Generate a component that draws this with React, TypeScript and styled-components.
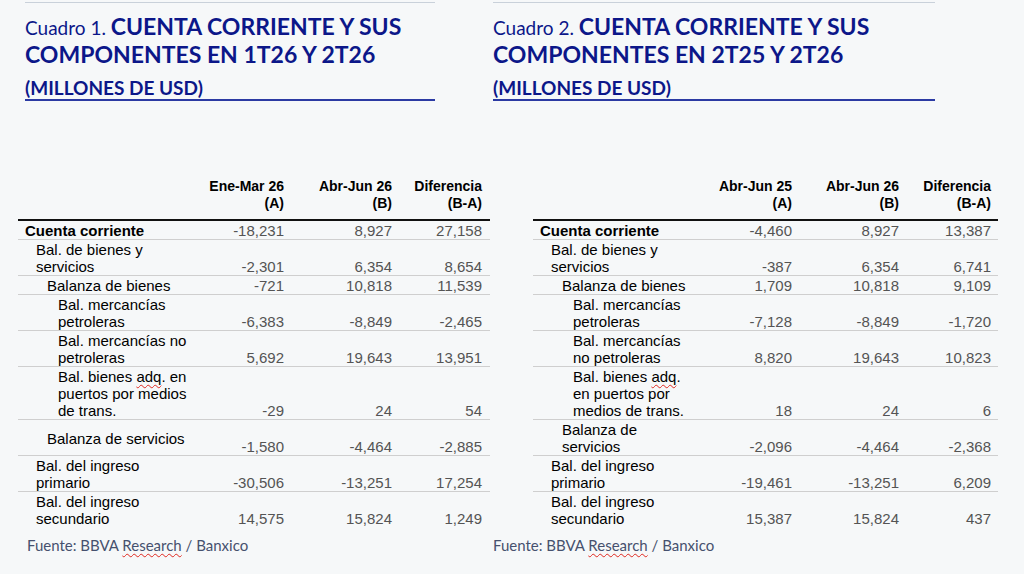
import React from 'react';
import styled, { createGlobalStyle } from 'styled-components';

const GlobalStyle = createGlobalStyle`
  html, body {
    margin: 0;
    padding: 0;
    background: #f6f8f9;
  }
  body {
    width: 1024px;
    height: 574px;
    overflow: hidden;
  }
`;

const Page = styled.main`
  display: flex;
  flex-direction: row;
  align-items: flex-start;
`;

const Panel = styled.section<{ $width: number }>`
  width: ${(p) => p.$width}px;
  flex: none;
  display: flex;
  flex-direction: column;
`;

const Heading = styled.header<{ $inset: number; $width: number }>`
  margin: 2px 0 0 ${(p) => p.$inset}px;
  width: ${(p) => p.$width}px;
  border-top: 1px solid #c9d1da;
  padding-top: 10px;
  color: #0c1789;
  font-family: Lato, 'Open Sans', sans-serif;
`;

const Title = styled.h2`
  margin: 0;
  font-size: 23px;
  font-weight: 700;
  line-height: 27px;
  letter-spacing: 0;
`;

const Kicker = styled.span`
  font-size: 19px;
  font-weight: 400;
`;

const Subtitle = styled.h3`
  margin: 9px 0 0;
  font-size: 19px;
  font-weight: 700;
  line-height: 22px;
  border-bottom: 2px solid #2b3aa3;
`;

const Table = styled.div<{ $inset: number; $width: number }>`
  margin: 77px 0 0 ${(p) => p.$inset}px;
  width: ${(p) => p.$width}px;
  font-family: 'Liberation Sans', Arial, sans-serif;
  font-size: 15px;
  line-height: 17px;
`;

const HeadRow = styled.div<{ $cols: string; $pad: number }>`
  display: grid;
  grid-template-columns: ${(p) => p.$cols};
  padding: 0 ${(p) => p.$pad}px 7px 0;
  border-bottom: 2px solid #111;
  font-size: 14px;
  font-weight: 700;
  color: #000;
`;

const HeadCell = styled.div`
  text-align: right;
  white-space: nowrap;
`;

const BodyRow = styled.div<{ $cols: string; $pad: number; $lines: number; $last?: boolean }>`
  display: grid;
  grid-template-columns: ${(p) => p.$cols};
  min-height: ${(p) => p.$lines * 17}px;
  padding: 1px ${(p) => p.$pad}px 0 0;
  border-bottom: ${(p) => (p.$last ? '1px solid transparent' : '1px solid #cfcfcf')};
`;

const Label = styled.div<{ $level: number; $bold?: boolean }>`
  align-self: center;
  padding-left: ${(p) => 7 + p.$level * 11}px;
  color: #000;
  font-weight: ${(p) => (p.$bold ? 700 : 400)};
  white-space: nowrap;
`;

const Value = styled.div`
  align-self: end;
  text-align: right;
  color: #545454;
  white-space: nowrap;
`;

const Spell = styled.span`
  text-decoration: underline wavy #e0281f;
  text-decoration-thickness: 1px;
  text-underline-offset: 2px;
  text-decoration-skip-ink: none;
`;

const Source = styled.p<{ $inset: number }>`
  margin: 8px 0 0 ${(p) => p.$inset}px;
  font-family: Lato, 'Open Sans', sans-serif;
  font-size: 15px;
  line-height: 18px;
  color: #46516e;
`;

interface RowData {
  level: number;
  bold?: boolean;
  label: React.ReactNode[];
  lines?: number;
  values: string[];
}

interface TableData {
  number: number;
  title: [string, string];
  heads: string[][];
  rows: RowData[];
}

interface Geometry {
  width: number;
  headInset: number;
  headWidth: number;
  tableInset: number;
  tableWidth: number;
  cols: string;
  pad: number;
  sourceInset: number;
}

const left: TableData = {
  number: 1,
  title: ['CUENTA CORRIENTE Y SUS', 'COMPONENTES EN 1T26 Y 2T26'],
  heads: [
    ['Ene-Mar 26', '(A)'],
    ['Abr-Jun 26', '(B)'],
    ['Diferencia', '(B-A)'],
  ],
  rows: [
    { level: 0, bold: true, label: ['Cuenta corriente'], values: ['-18,231', '8,927', '27,158'] },
    { level: 1, label: ['Bal. de bienes y', 'servicios'], values: ['-2,301', '6,354', '8,654'] },
    { level: 2, label: ['Balanza de bienes'], values: ['-721', '10,818', '11,539'] },
    { level: 3, label: ['Bal. mercancías', 'petroleras'], values: ['-6,383', '-8,849', '-2,465'] },
    { level: 3, label: ['Bal. mercancías no', 'petroleras'], values: ['5,692', '19,643', '13,951'] },
    {
      level: 3,
      label: [
        <>
          Bal. bienes <Spell>adq</Spell>. en
        </>,
        'puertos por medios',
        'de trans.',
      ],
      values: ['-29', '24', '54'],
    },
    { level: 2, label: ['Balanza de servicios'], lines: 2, values: ['-1,580', '-4,464', '-2,885'] },
    { level: 1, label: ['Bal. del ingreso', 'primario'], values: ['-30,506', '-13,251', '17,254'] },
    { level: 1, label: ['Bal. del ingreso', 'secundario'], values: ['14,575', '15,824', '1,249'] },
  ],
};

const right: TableData = {
  number: 2,
  title: ['CUENTA CORRIENTE Y SUS', 'COMPONENTES EN 2T25 Y 2T26'],
  heads: [
    ['Abr-Jun 25', '(A)'],
    ['Abr-Jun 26', '(B)'],
    ['Diferencia', '(B-A)'],
  ],
  rows: [
    { level: 0, bold: true, label: ['Cuenta corriente'], values: ['-4,460', '8,927', '13,387'] },
    { level: 1, label: ['Bal. de bienes y', 'servicios'], values: ['-387', '6,354', '6,741'] },
    { level: 2, label: ['Balanza de bienes'], values: ['1,709', '10,818', '9,109'] },
    { level: 3, label: ['Bal. mercancías', 'petroleras'], values: ['-7,128', '-8,849', '-1,720'] },
    { level: 3, label: ['Bal. mercancías', 'no petroleras'], values: ['8,820', '19,643', '10,823'] },
    {
      level: 3,
      label: [
        <>
          Bal. bienes <Spell>adq</Spell>.
        </>,
        'en puertos por',
        'medios de trans.',
      ],
      values: ['18', '24', '6'],
    },
    { level: 2, label: ['Balanza de', 'servicios'], values: ['-2,096', '-4,464', '-2,368'] },
    { level: 1, label: ['Bal. del ingreso', 'primario'], values: ['-19,461', '-13,251', '6,209'] },
    { level: 1, label: ['Bal. del ingreso', 'secundario'], values: ['15,387', '15,824', '437'] },
  ],
};

const leftGeometry: Geometry = {
  width: 493,
  headInset: 25,
  headWidth: 410,
  tableInset: 18,
  tableWidth: 472,
  cols: '190px 76px 108px 90px',
  pad: 8,
  sourceInset: 27,
};

const rightGeometry: Geometry = {
  width: 531,
  headInset: 0,
  headWidth: 442,
  tableInset: 40,
  tableWidth: 465,
  cols: '185px 74px 107px 92px',
  pad: 7,
  sourceInset: 0,
};

const BalanceTable: React.FC<{ data: TableData; geo: Geometry }> = ({ data, geo }) => (
  <Panel $width={geo.width}>
    <Heading $inset={geo.headInset} $width={geo.headWidth}>
      <Title>
        <Kicker>Cuadro {data.number}. </Kicker>
        {data.title[0]}
        <br />
        {data.title[1]}
      </Title>
      <Subtitle>(MILLONES DE USD)</Subtitle>
    </Heading>

    <Table $inset={geo.tableInset} $width={geo.tableWidth}>
      <HeadRow $cols={geo.cols} $pad={geo.pad}>
        <div />
        {data.heads.map((h) => (
          <HeadCell key={h[0]}>
            {h[0]}
            <br />
            {h[1]}
          </HeadCell>
        ))}
      </HeadRow>
      {data.rows.map((row, i) => (
        <BodyRow
          key={i}
          $cols={geo.cols}
          $pad={geo.pad}
          $lines={row.lines ?? row.label.length}
          $last={i === data.rows.length - 1}
        >
          <Label $level={row.level} $bold={row.bold}>
            {row.label.map((line, j) => (
              <div key={j}>{line}</div>
            ))}
          </Label>
          {row.values.map((v, j) => (
            <Value key={j}>{v}</Value>
          ))}
        </BodyRow>
      ))}
    </Table>

    <Source $inset={geo.sourceInset}>
      Fuente: BBVA <Spell>Research</Spell> / Banxico
    </Source>
  </Panel>
);

const App: React.FC = () => (
  <>
    <GlobalStyle />
    <Page>
      <BalanceTable data={left} geo={leftGeometry} />
      <BalanceTable data={right} geo={rightGeometry} />
    </Page>
  </>
);

export default App;
